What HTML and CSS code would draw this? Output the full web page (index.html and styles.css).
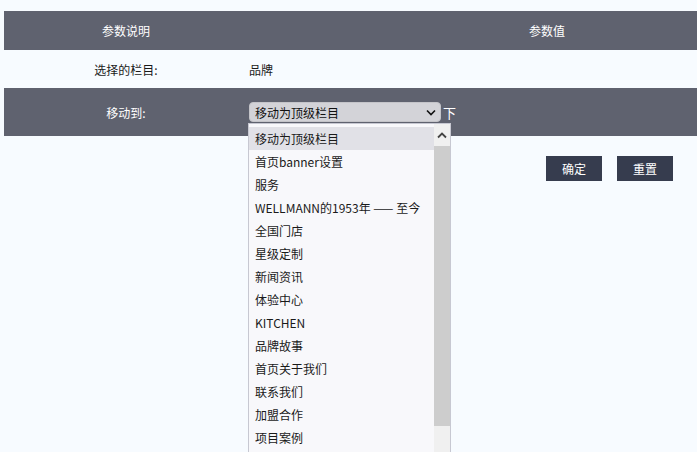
FILE: index.html
```html
<!DOCTYPE html>
<html>
<head>
<meta charset="utf-8">
<link rel="stylesheet" href="styles.css">
</head>
<body>
<div class="page">
  <div class="table">
    <div class="row head">
      <div class="c1">参数说明</div>
      <div class="c2 headval">参数值</div>
    </div>
    <div class="row light">
      <div class="c1">选择的栏目:</div>
      <div class="c2">品牌</div>
    </div>
    <div class="row dark tall">
      <div class="c1">移动到:</div>
      <div class="c2">
        <div class="select-wrap">
          <div class="select">
            <span>移动为顶级栏目</span>
            <svg class="chev" width="10" height="7" viewBox="0 0 10 7"><path d="M1 1.5 L5 5.5 L9 1.5" fill="none" stroke="#111" stroke-width="1.6"/></svg>
          </div>
          <span class="after">下</span>
          <div class="popup">
            <ul class="list">
              <li class="sel">移动为顶级栏目</li>
              <li>首页banner设置</li>
              <li>服务</li>
              <li>WELLMANN的1953年 —— 至今</li>
              <li>全国门店</li>
              <li>星级定制</li>
              <li>新闻资讯</li>
              <li>体验中心</li>
              <li>KITCHEN</li>
              <li>品牌故事</li>
              <li>首页关于我们</li>
              <li>联系我们</li>
              <li>加盟合作</li>
              <li>项目案例</li>
            </ul>
            <div class="scrollbar">
              <div class="arrow"><svg width="10" height="7" viewBox="0 0 10 7"><path d="M1 5.5 L5 1.5 L9 5.5" fill="none" stroke="#444" stroke-width="1.8"/></svg></div>
              <div class="thumb"></div>
              <div class="track"></div>
            </div>
          </div>
        </div>
      </div>
    </div>
  </div>
  <div class="buttons">
    <button class="btn">确定</button>
    <button class="btn">重置</button>
  </div>
</div>
</body>
</html>
```
FILE: styles.css
```css
html, body {
  margin: 0;
  padding: 0;
  background: #f7fbff;
  overflow: hidden;
}
body {
  font-family: "Noto Sans CJK SC", "Noto Sans", sans-serif;
  font-size: 12px;
  color: #1a1a1a;
  height: 452px;
}
.page {
  padding: 11px 0 0 4px;
}
.row {
  display: grid;
  grid-template-columns: 244px 1fr;
  align-items: center;
  height: 39px;
}
.row.light { height: 38px; }
.row.tall { height: 48px; }
.head, .dark {
  background: #5f626f;
  color: #fff;
}
.c1 {
  text-align: center;
}
.c2 {
  padding-left: 1px;
}
.c2.headval {
  padding-left: 281px;
}
.select-wrap {
  position: relative;
  display: flex;
  align-items: center;
  gap: 2px;
}
.select {
  width: 192px;
  height: 20px;
  box-sizing: border-box;
  background: #d3d3d8;
  border-radius: 4px;
  border: 1px solid #c4c4c9;
  color: #111;
  display: flex;
  align-items: center;
  justify-content: space-between;
  padding: 0 4px 0 5px;
}
.chev { display: block; }
.after {
  color: #fff;
  font-size: 13px;
}
.popup {
  position: absolute;
  left: -1px;
  top: 21px;
  width: 203px;
  height: 340px;
  box-sizing: border-box;
  background: #f8f8fb;
  border: 1px solid #c7c8d2;
  display: flex;
  padding: 3px 0 0 0;
  color: #1a1a1a;
}
.list {
  list-style: none;
  margin: 0;
  padding: 0;
  width: 185px;
}
.list li {
  height: 23px;
  line-height: 23px;
  padding-left: 6px;
  white-space: nowrap;
}
.list li.sel {
  background: #e1e1e7;
}
.scrollbar {
  width: 16px;
  display: flex;
  flex-direction: column;
  background: #f0f0f0;
  margin-top: -3px;
}
.arrow {
  height: 22px;
  display: flex;
  align-items: center;
  justify-content: center;
  background: #f0f0f0;
}
.thumb {
  height: 280px;
  background: #cdcdcd;
}
.track {
  flex: 1;
  background: #f0f0f0;
}
.buttons {
  display: flex;
  gap: 15px;
  padding: 20px 0 0 542px;
}
.btn {
  width: 56px;
  height: 25px;
  border: none;
  background: #363c4e;
  color: #fff;
  font-family: "Noto Sans CJK SC", sans-serif;
  font-size: 12px;
  padding: 0;
}
```
